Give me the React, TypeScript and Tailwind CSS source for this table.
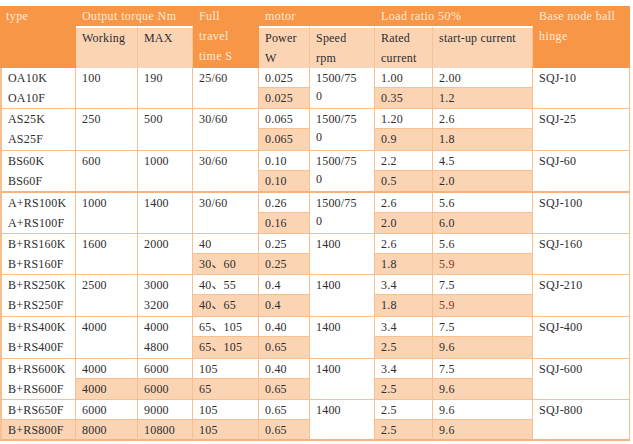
import React from "react";

type Split = { t: string; b: string; shade?: boolean; red?: boolean };
type Cell = string | Split;

const COLS = [76, 62, 55, 66, 51, 65, 58, 100, 97];

const sh = (t: string, b: string, red = false): Split => ({ t, b, shade: true, red });
const pl = (t: string, b: string): Split => ({ t, b });

const GROUPS: { cells: Cell[]; thick?: boolean; tall?: boolean }[] = [
  {
    cells: [pl("OA10K", "OA10F"), "100", "190", "25/60", sh("0.025", "0.025"), "1500/75|0", sh("1.00", "0.35"), sh("2.00", "1.2"), "SQJ-10"],
  },
  {
    cells: [pl("AS25K", "AS25F"), "250", "500", "30/60", sh("0.065", "0.065"), "1500/75|0", sh("1.20", "0.9"), sh("2.6", "1.8"), "SQJ-25"],
    tall: true,
  },
  {
    cells: [pl("BS60K", "BS60F"), "600", "1000", "30/60", sh("0.10", "0.10"), "1500/75|0", sh("2.2", "0.5"), sh("4.5", "2.0"), "SQJ-60"],
    thick: true,
    tall: true,
  },
  {
    cells: [pl("A+RS100K", "A+RS100F"), "1000", "1400", "30/60", sh("0.26", "0.16"), "1500/75|0", sh("2.6", "2.0"), sh("5.6", "6.0"), "SQJ-100"],
  },
  {
    cells: [pl("B+RS160K", "B+RS160F"), "1600", "2000", sh("40", "30、60"), sh("0.25", "0.25"), "1400", sh("2.6", "1.8"), sh("5.6", "5.9", true), "SQJ-160"],
  },
  {
    cells: [pl("B+RS250K", "B+RS250F"), "2500", pl("3000", "3200"), sh("40、55", "40、65"), sh("0.4", "0.4"), "1400", sh("3.4", "1.8"), sh("7.5", "5.9", true), "SQJ-210"],
    tall: true,
  },
  {
    cells: [pl("B+RS400K", "B+RS400F"), "4000", pl("4000", "4800"), sh("65、105", "65、105"), sh("0.40", "0.65"), "1400", sh("3.4", "2.5"), sh("7.5", "9.6"), "SQJ-400"],
    tall: true,
  },
  {
    cells: [pl("B+RS600K", "B+RS600F"), sh("4000", "4000"), sh("6000", "6000"), sh("105", "65"), sh("0.40", "0.65"), "1400", sh("3.4", "2.5"), sh("7.5", "9.6"), "SQJ-600"],
  },
  {
    cells: [sh("B+RS650F", "B+RS800F"), sh("6000", "8000"), sh("9000", "10800"), sh("105", "105"), sh("0.65", "0.65"), "1400", sh("2.5", "2.5"), sh("9.6", "9.6"), "SQJ-800"],
    thick: true,
  },
];

function lines(s: string) {
  const parts = s.split("|");
  return parts.map((p, i) => (
    <React.Fragment key={i}>
      {p}
      {i < parts.length - 1 && <br />}
    </React.Fragment>
  ));
}

function Group({ cells, thick, tall }: { cells: Cell[]; thick?: boolean; tall?: boolean }) {
  const bottom = thick ? "border-b-2 border-b-[#f8b27e]" : "border-b border-b-[#fabf8f]";
  const edge = (i: number) => (i === 0 ? "border-l-2 border-l-[#fabf8f]" : "");
  return (
    <>
      <tr className="h-[20px]">
        {cells.map((c, i) =>
          typeof c === "string" ? (
            <td key={i} rowSpan={2} className={`align-top pl-[6px] pt-px border-r border-r-[#fabf8f] ${bottom} ${edge(i)}`}>
              {lines(c)}
            </td>
          ) : (
            <td
              key={i}
              className={`align-top pl-[6px] pt-px border-r border-r-[#fabf8f] ${c.shade ? "border-b border-b-[#fabf8f]" : ""} ${edge(i)}`}
            >
              {c.t}
            </td>
          )
        )}
      </tr>
      <tr className={tall ? "h-[22px]" : "h-[21px]"}>
        {cells.map((c, i) =>
          typeof c === "string" ? null : (
            <td
              key={i}
              className={`align-top pl-[6px] pt-px border-r border-r-[#fabf8f] ${bottom} ${edge(i)} ${c.shade ? "bg-[#fbd4b4]" : ""} ${c.red ? "text-[#84382a]" : ""}`}
            >
              {c.b}
            </td>
          )
        )}
      </tr>
    </>
  );
}

export default function App() {
  const head = "align-top text-left font-normal pl-[6px] bg-[#f79646] text-[#fdeada] tracking-[0.4px]";
  const sub = "align-top text-left font-normal pl-[6px] bg-[#fbd4b4] text-[#2e2e2e] border-t-2 border-t-white border-r border-r-[#f9c29a]";
  return (
    <div className="w-[633px] h-[444px] bg-white pt-[6px] font-['Liberation_Serif','Noto_Sans_CJK_SC',serif] text-[12px] leading-[20px] tracking-[0.2px] text-[#2e2e2e]">
      <table className="table-fixed w-[630px] border-separate border-spacing-0">
        <colgroup>
          {COLS.map((w, i) => (
            <col key={i} style={{ width: w }} />
          ))}
        </colgroup>
        <thead>
          <tr className="h-[20px]">
            <th rowSpan={2} className={head}>type</th>
            <th colSpan={2} className={head}>Output torque Nm</th>
            <th rowSpan={2} className={head}>
              Full
              <br />
              travel
              <br />
              time S
            </th>
            <th colSpan={2} className={head}>motor</th>
            <th colSpan={2} className={head}>Load ratio 50%</th>
            <th rowSpan={2} className={head}>
              Base node ball
              <br />
              hinge
            </th>
          </tr>
          <tr className="h-[42px]">
            <th className={sub}>Working</th>
            <th className={sub}>MAX</th>
            <th className={sub}>
              Power
              <br />W
            </th>
            <th className={sub}>
              Speed
              <br />
              rpm
            </th>
            <th className={sub}>
              Rated
              <br />
              current
            </th>
            <th className={sub}>start-up current</th>
          </tr>
        </thead>
        <tbody className="leading-[18px]">
          {GROUPS.map((g, i) => (
            <Group key={i} cells={g.cells} thick={g.thick} tall={g.tall} />
          ))}
        </tbody>
      </table>
    </div>
  );
}
